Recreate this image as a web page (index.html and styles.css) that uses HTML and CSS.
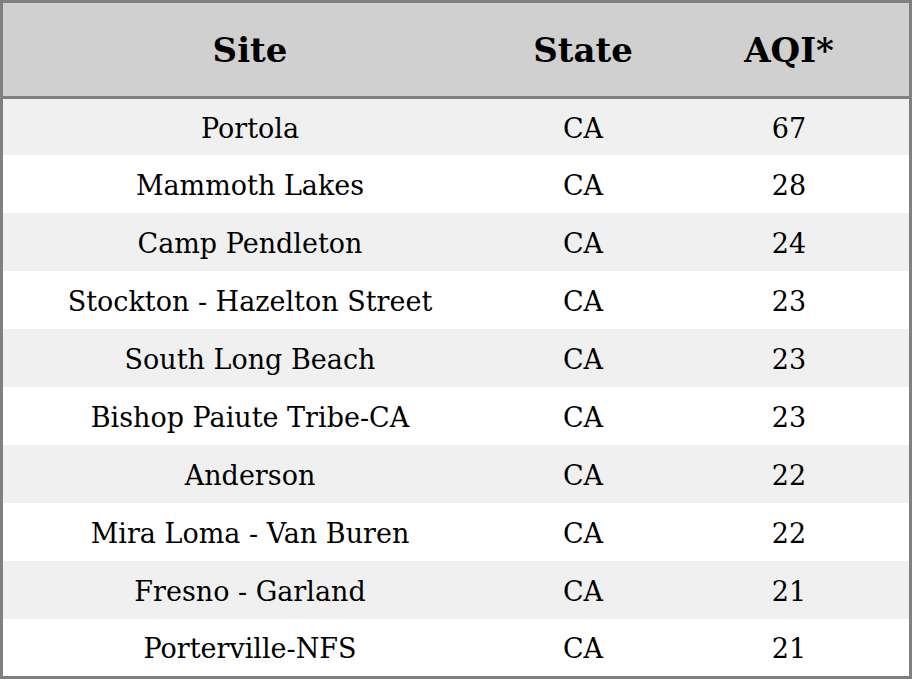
FILE: index.html
```html
<!DOCTYPE html>
<html>
<head>
<meta charset="utf-8">
<link rel="stylesheet" href="styles.css">
</head>
<body>
<table class="aqi">
  <colgroup><col class="c-site"><col class="c-state"><col class="c-aqi"></colgroup>
  <thead>
    <tr><th>Site</th><th>State</th><th>AQI*</th></tr>
  </thead>
  <tbody>
    <tr><td>Portola</td><td>CA</td><td>67</td></tr>
    <tr><td>Mammoth Lakes</td><td>CA</td><td>28</td></tr>
    <tr><td>Camp Pendleton</td><td>CA</td><td>24</td></tr>
    <tr><td>Stockton - Hazelton Street</td><td>CA</td><td>23</td></tr>
    <tr><td>South Long Beach</td><td>CA</td><td>23</td></tr>
    <tr><td>Bishop Paiute Tribe-CA</td><td>CA</td><td>23</td></tr>
    <tr><td>Anderson</td><td>CA</td><td>22</td></tr>
    <tr><td>Mira Loma - Van Buren</td><td>CA</td><td>22</td></tr>
    <tr><td>Fresno - Garland</td><td>CA</td><td>21</td></tr>
    <tr><td>Porterville-NFS</td><td>CA</td><td>21</td></tr>
  </tbody>
</table>
</body>
</html>
```
FILE: styles.css
```css
html, body {
  margin: 0;
  padding: 0;
  background: #ffffff;
}
.aqi {
  width: 912px;
  height: 679px;
  border-collapse: separate;
  border-spacing: 0;
  border: 3px solid #808080;
  box-sizing: border-box;
  font-family: "DejaVu Serif", serif;
  color: #000;
  table-layout: fixed;
}
.c-site { width: 494px; }
.c-state { width: 172px; }
.c-aqi { width: 240px; }
.aqi th {
  background: #d0d0d0;
  font-size: 34px;
  font-weight: bold;
  height: 93px;
  padding: 0;
  text-align: center;
  border-bottom: 3px solid #808080;
}
.aqi td {
  font-size: 27px;
  text-align: center;
  padding: 2px 0 0 0;
  height: 56px;
  box-sizing: border-box;
}
.aqi tbody tr:nth-child(n) td { height: 58px; }
.aqi tbody tr:first-child td { height: 56px; }
.aqi tbody tr:last-child td { height: 57px; }
.aqi tbody tr:nth-child(odd) td { background: #f0f0f0; }
.aqi tbody tr:nth-child(even) td { background: #ffffff; }
```
